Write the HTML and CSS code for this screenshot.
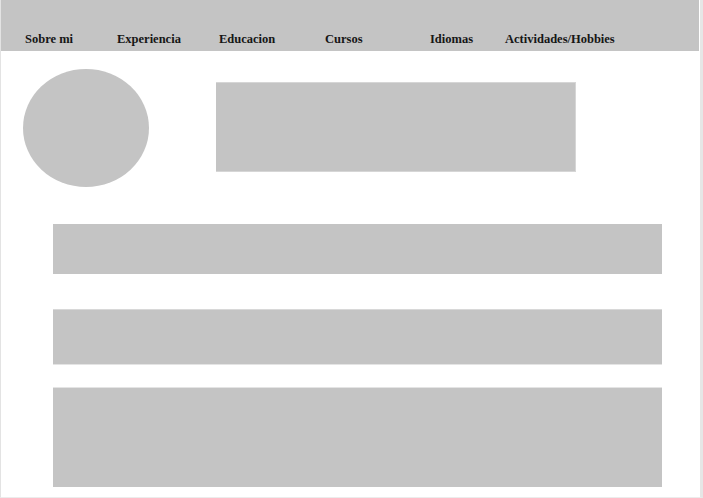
FILE: index.html
```html
<!DOCTYPE html>
<html lang="es">
<head>
<meta charset="utf-8">
<title>CV</title>
<link rel="stylesheet" href="styles.css">
</head>
<body>
<div class="frame">
  <nav class="nav">
    <a class="nav-item w1">Sobre mi</a>
    <a class="nav-item w2">Experiencia</a>
    <a class="nav-item w3">Educacion</a>
    <a class="nav-item w4">Cursos</a>
    <a class="nav-item w5">Idiomas</a>
    <a class="nav-item">Actividades/Hobbies</a>
  </nav>
  <main class="content">
    <section class="hero">
      <div class="avatar"></div>
      <div class="intro"></div>
    </section>
    <div class="block b1"></div>
    <div class="block b2"></div>
    <div class="block b3"></div>
  </main>
</div>
</body>
</html>
```
FILE: styles.css
```css
* { box-sizing: border-box; }
html, body { margin: 0; padding: 0; background: #fff; }
.frame {
  width: 703px;
  height: 498px;
  border-left: 1px solid #e3e3e3;
  border-right: 3px solid #e6e6e6;
  border-bottom: 1px solid #ececec;
  display: flex;
  flex-direction: column;
  overflow: hidden;
}
.nav {
  height: 51px;
  width: 698px;
  background: #c4c4c4;
  display: flex;
  align-items: flex-end;
  padding: 0 0 4px 24px;
  font-family: "Liberation Serif", "Times New Roman", serif;
  font-weight: bold;
  font-size: 12.5px;
  line-height: 15px;
  color: #161616;
}
.nav-item { display: block; white-space: nowrap; }
.w1 { width: 92px; }
.w2 { width: 102px; }
.w3 { width: 106px; }
.w4 { width: 105px; }
.w5 { width: 75px; }
.content {
  display: flex;
  flex-direction: column;
}
.hero {
  display: flex;
  align-items: flex-start;
  padding: 18px 0 0 22px;
  gap: 67px;
}
.avatar {
  width: 126px;
  height: 118px;
  border-radius: 50%;
  background: #c4c4c4;
}
.intro {
  margin-top: 13px;
  width: 360px;
  height: 90px;
  background: #c4c4c4;
  border: 1px solid #d6d6d6;
  border-left: none;
}
.block {
  margin-left: 52px;
  width: 609px;
  background: #c4c4c4;
}
.b1 { margin-top: 37px; height: 50px; }
.b2 { margin-top: 35px; height: 56px; border-top: 1px solid #d8d8d8; border-bottom: 1px solid #e4e4e4; }
.b3 { margin-top: 22px; height: 100px; border-top: 1px solid #e4e4e4; }
```
